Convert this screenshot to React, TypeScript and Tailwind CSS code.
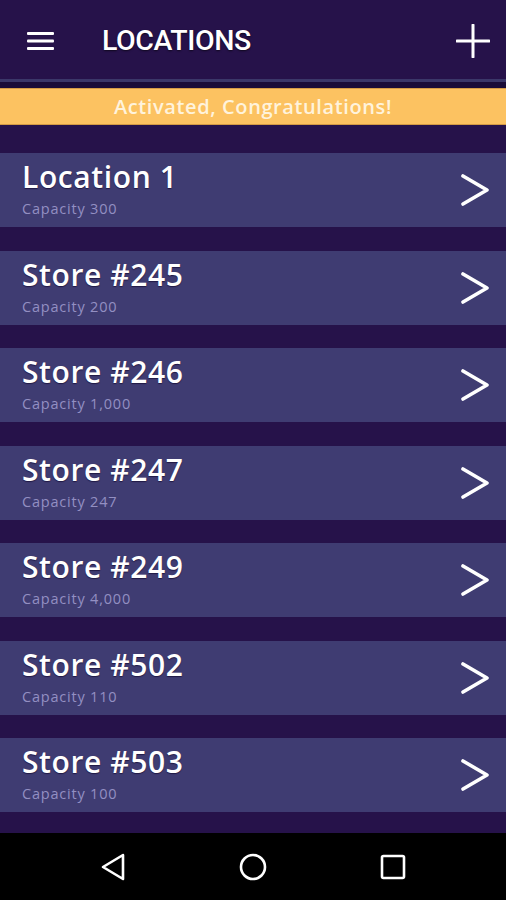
import React from "react";

const items = [
  { name: "Location 1", cap: "Capacity 300" },
  { name: "Store #245", cap: "Capacity 200" },
  { name: "Store #246", cap: "Capacity 1,000" },
  { name: "Store #247", cap: "Capacity 247" },
  { name: "Store #249", cap: "Capacity 4,000" },
  { name: "Store #502", cap: "Capacity 110" },
  { name: "Store #503", cap: "Capacity 100" },
];

function Chevron() {
  return (
    <svg width="30" height="32" viewBox="0 0 30 32" fill="none">
      <path d="M3 2 L27 16 L3 30" stroke="white" strokeWidth="3.6" strokeLinecap="round" strokeLinejoin="round" />
    </svg>
  );
}

export default function App() {
  return (
    <div className="w-[506px] h-[900px] flex flex-col bg-[#26124a] overflow-hidden" style={{ fontFamily: "'Open Sans', 'Noto Sans', sans-serif" }}>
      {/* Header */}
      <div className="h-[79px] flex items-center shrink-0">
        <div className="w-[102px] pl-[27px] pt-[2px] flex items-center">
          <svg width="27" height="18" viewBox="0 0 27 18">
            <rect x="0" y="0" width="27" height="3" rx="1" fill="white" />
            <rect x="0" y="7.5" width="27" height="3" rx="1" fill="white" />
            <rect x="0" y="15" width="27" height="3" rx="1" fill="white" />
          </svg>
        </div>
        <div
          className="flex-1 pt-[4px] text-white text-[28.5px] font-medium tracking-[-0.4px] [text-shadow:0_1px_2px_rgba(0,0,0,0.6)]"
          style={{ fontFamily: "Roboto, sans-serif" }}
        >
          LOCATIONS
        </div>
        <div className="pr-[16px] pt-[2px]">
          <svg width="34" height="34" viewBox="0 0 34 34">
            <path d="M17 1 V33 M1 17 H33" stroke="white" strokeWidth="3" strokeLinecap="round" />
          </svg>
        </div>
      </div>
      <div className="h-[3px] bg-[#3b3769] shrink-0" />
      <div className="h-[6px] bg-[#1a0c38] shrink-0" />
      {/* Banner */}
      <div className="h-[37px] bg-[#fcc261] border-y border-[#d49a45] flex items-center justify-center shrink-0">
        <span className="text-[#fff3dc] text-[20px] font-semibold tracking-[0.6px]">Activated, Congratulations!</span>
      </div>
      {/* List */}
      <div className="flex flex-col gap-[23.5px] pt-[28px]">
        {items.map((it) => (
          <div key={it.name} className="h-[74px] bg-[#3f3c72] flex items-center pl-[22px] pr-[16px] shrink-0">
            <div className="flex-1 flex flex-col -mt-[2px]">
              <div className="text-white text-[30px] leading-[34px] font-semibold tracking-[0.6px] [text-shadow:0_1px_1px_rgba(20,10,50,0.7)]">{it.name}</div>
              <div className="text-[#938fc2] text-[14.5px] leading-[18px] mt-[6px] tracking-[0.8px]">{it.cap}</div>
            </div>
            <Chevron />
          </div>
        ))}
      </div>
      <div className="flex-1" />
      {/* Nav bar */}
      <div className="h-[67px] bg-black flex items-center justify-center shrink-0">
        <div className="w-[140px] flex justify-center">
          <svg width="26" height="28" viewBox="0 0 26 28">
            <path d="M23 2 L3 14 L23 26 Z" stroke="white" strokeWidth="2.6" fill="none" strokeLinejoin="round" />
          </svg>
        </div>
        <div className="w-[140px] flex justify-center">
          <svg width="28" height="28" viewBox="0 0 28 28">
            <circle cx="14" cy="14" r="12" stroke="white" strokeWidth="2.6" fill="none" />
          </svg>
        </div>
        <div className="w-[140px] flex justify-center">
          <svg width="26" height="26" viewBox="0 0 26 26">
            <rect x="2" y="2" width="22" height="22" rx="1.5" stroke="white" strokeWidth="2.6" fill="none" />
          </svg>
        </div>
      </div>
    </div>
  );
}
